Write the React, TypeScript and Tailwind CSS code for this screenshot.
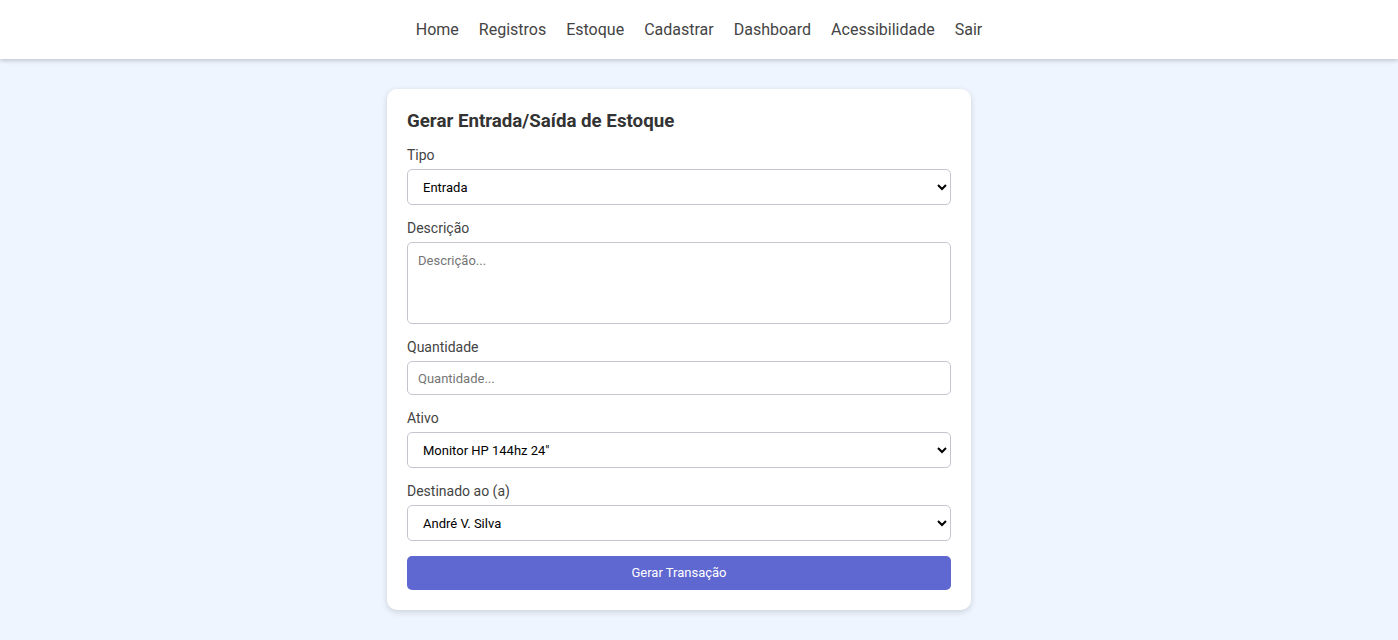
import React from 'react';

const navItems = ['Home', 'Registros', 'Estoque', 'Cadastrar', 'Dashboard', 'Acessibilidade', 'Sair'];

const Label: React.FC<{ children: React.ReactNode }> = ({ children }) => (
    <label className="block text-[14px] leading-[20px] text-[#444] mb-[4px]">{children}</label>
);

const fieldClass = 'block w-full border border-[#c5c5d2] rounded-[5px] bg-white text-[13px] text-black';

export default function App() {
    return (
        <div className="min-h-[640px] bg-[#eef5ff]" style={{ fontFamily: 'Roboto, "Liberation Sans", sans-serif' }}>
            <header className="h-[59px] bg-white shadow-[0_2px_4px_rgba(0,0,0,0.18)] flex items-center justify-center">
                <nav className="flex gap-[20px] text-[16px] text-[#444]">
                    {navItems.map((item) => (
                        <a key={item} href="#" className="leading-[20px]">{item}</a>
                    ))}
                </nav>
            </header>

            <main className="flex justify-center pt-[30px] pb-[30px]">
                <div className="w-[584px] mr-[40px] bg-white rounded-[10px] shadow-[0_2px_6px_rgba(0,0,0,0.15)] px-[20px] pt-[21px] pb-[20px]">
                    <h2 className="text-[18.72px] leading-[22px] font-bold text-[#333] mb-[13px]">Gerar Entrada/Saída de Estoque</h2>

                    <Label>Tipo</Label>
                    <select className={`${fieldClass} h-[36px] px-[11px] mb-[13px]`} defaultValue="Entrada">
                        <option>Entrada</option>
                        <option>Saída</option>
                    </select>

                    <Label>Descrição</Label>
                    <textarea
                        placeholder="Descrição..."
                        className={`${fieldClass} h-[82px] px-[10px] py-[8px] mb-[13px] resize-none placeholder:text-[#757575] outline-none`}
                    />

                    <Label>Quantidade</Label>
                    <input
                        placeholder="Quantidade..."
                        className={`${fieldClass} h-[34px] px-[10px] mb-[13px] placeholder:text-[#757575] outline-none`}
                    />

                    <Label>Ativo</Label>
                    <select className={`${fieldClass} h-[36px] px-[11px] mb-[13px]`} defaultValue="m">
                        <option value="m">Monitor HP 144hz 24"</option>
                    </select>

                    <Label>Destinado ao (a)</Label>
                    <select className={`${fieldClass} h-[36px] px-[11px] mb-[15px]`} defaultValue="a">
                        <option value="a">André V. Silva</option>
                    </select>

                    <button className="block w-full h-[34px] rounded-[5px] bg-[#5f67d1] text-white text-[13px]">
                        Gerar Transação
                    </button>
                </div>
            </main>
        </div>
    );
}
